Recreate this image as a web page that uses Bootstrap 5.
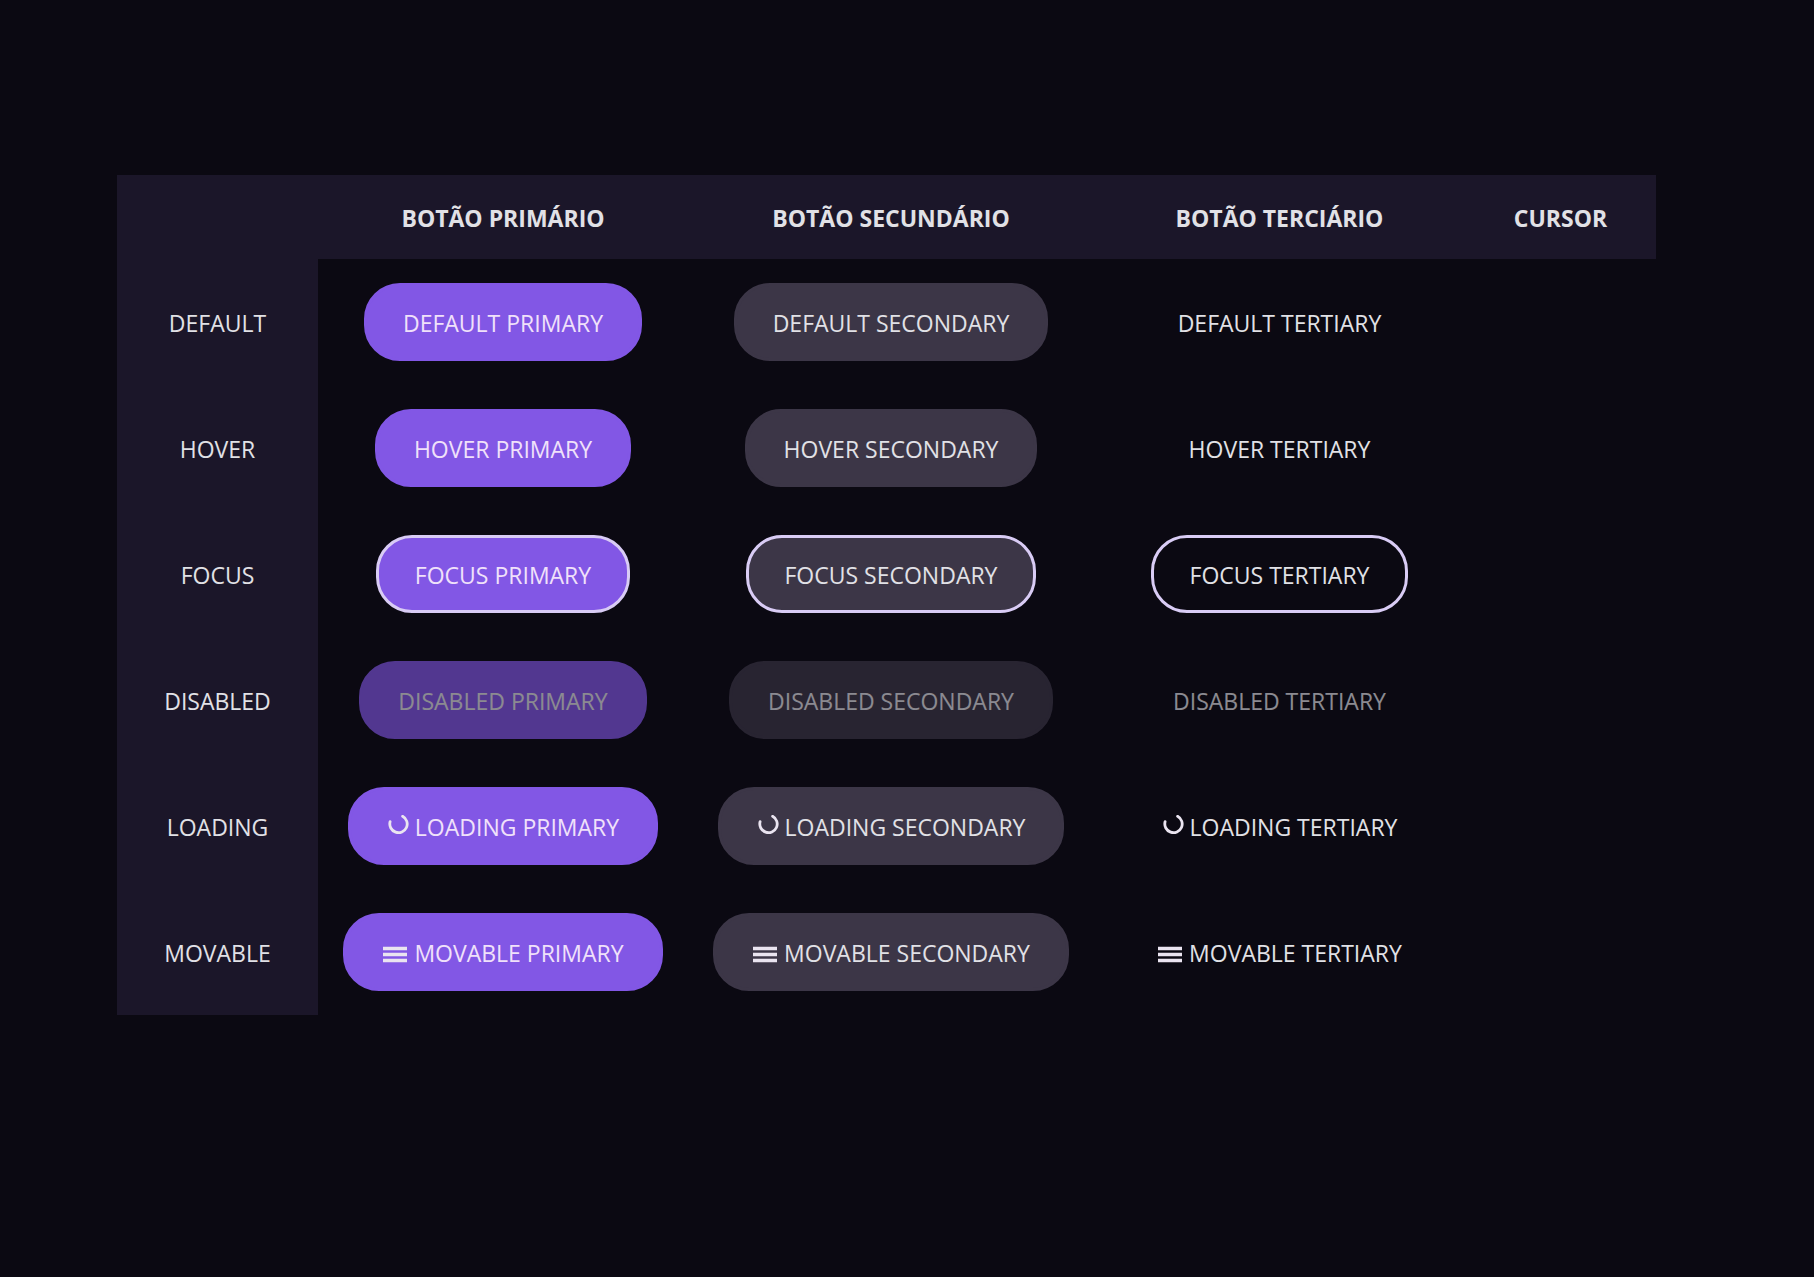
<!DOCTYPE html>
<html lang="pt-BR">
<head>
<meta charset="utf-8">
<meta name="viewport" content="width=device-width, initial-scale=1">
<title>Botões</title>
<link href="https://cdn.jsdelivr.net/npm/bootstrap@5.3.0/dist/css/bootstrap.min.css" rel="stylesheet">
<style>
  body { background: #0b0912; color: #e1e1e6; font-family: "Segoe UI", "Open Sans", sans-serif; font-size: 23px; line-height: 36px; }
  .states-page { padding: 175px 158px 120px 117px; }
  .states-table { table-layout: fixed; border-collapse: collapse; }
  .states-table td { padding: 24px 0; }
  .states-table th { padding: 25px 0 23px; }
  .states-table thead, .states-table tbody th { background: #1b1629; }
  .col-state { width: 201px; }
  .col-primary { width: 370px; }
  .col-secondary { width: 406px; }
  .col-tertiary { width: 371px; }
  .col-cursor { width: 191px; }
  .state-btn {
    --bs-btn-font-size: 23px;
    --bs-btn-line-height: 36px;
    --bs-btn-border-width: 3px;
    --bs-btn-border-radius: 36px;
    --bs-btn-color: #e1e1e6;
    --bs-btn-hover-color: #e1e1e6;
    --bs-btn-active-color: #e1e1e6;
    --bs-btn-disabled-color: #e1e1e6;
    --bs-btn-disabled-border-color: transparent;
    --bs-btn-disabled-opacity: .6;
    padding: 19px 36px 17px;
  }
  .state-primary { --bs-btn-bg: #8257e5; --bs-btn-border-color: #8257e5; --bs-btn-hover-bg: #9466ff; --bs-btn-hover-border-color: #9466ff; --bs-btn-active-bg: #8257e5; --bs-btn-disabled-bg: #8257e5; --bs-btn-disabled-border-color: #8257e5; --bs-btn-color: #f0e1fa; }
  .state-secondary { --bs-btn-bg: #3c3647; --bs-btn-border-color: #3c3647; --bs-btn-hover-bg: #4a4456; --bs-btn-hover-border-color: #4a4456; --bs-btn-active-bg: #3c3647; --bs-btn-disabled-bg: #3c3647; --bs-btn-disabled-border-color: #3c3647; }
  .state-focus { --bs-btn-border-color: #d9ccf5; }
  .icon-load { width: 22px; height: 24px; }
  .icon-move { width: 26px; height: 24px; }
  .state-btn svg { flex: none; margin-right: 6px; }
</style>
<script src="https://cdn.jsdelivr.net/npm/bootstrap@5.3.0/dist/js/bootstrap.bundle.min.js"></script>
</head>
<body>
<svg class="d-none" aria-hidden="true">
  <symbol id="load" viewBox="0 0 22 24"><path d="M15.6 1.3A8.7 8.7 0 1 1 3.1 6.7" fill="none" stroke="#eae4f0" stroke-width="2.8" stroke-linecap="round"/></symbol>
  <symbol id="move" viewBox="0 0 26 24"><path d="M1 7.5h24M1 13.5h24M1 19.5h24" fill="none" stroke="#eae4f0" stroke-width="3.4"/></symbol>
</svg>
<main class="states-page">
  <table class="states-table w-100 text-center align-middle text-nowrap">
    <colgroup><col class="col-state"><col class="col-primary"><col class="col-secondary"><col class="col-tertiary"><col class="col-cursor"></colgroup>
    <thead>
      <tr><td></td><th scope="col">BOTÃO PRIMÁRIO</th><th scope="col">BOTÃO SECUNDÁRIO</th><th scope="col">BOTÃO TERCIÁRIO</th><th scope="col">CURSOR</th></tr>
    </thead>
    <tbody>
      <tr>
        <th class="fw-normal" scope="row">DEFAULT</th>
        <td><button type="button" class="btn state-btn state-primary d-inline-flex align-items-center">DEFAULT PRIMARY</button></td>
        <td><button type="button" class="btn state-btn state-secondary d-inline-flex align-items-center">DEFAULT SECONDARY</button></td>
        <td><button type="button" class="btn state-btn d-inline-flex align-items-center">DEFAULT TERTIARY</button></td>
        <td></td>
      </tr>
      <tr>
        <th class="fw-normal" scope="row">HOVER</th>
        <td><button type="button" class="btn state-btn state-primary d-inline-flex align-items-center">HOVER PRIMARY</button></td>
        <td><button type="button" class="btn state-btn state-secondary d-inline-flex align-items-center">HOVER SECONDARY</button></td>
        <td><button type="button" class="btn state-btn d-inline-flex align-items-center">HOVER TERTIARY</button></td>
        <td></td>
      </tr>
      <tr>
        <th class="fw-normal" scope="row">FOCUS</th>
        <td><button type="button" class="btn state-btn state-primary state-focus d-inline-flex align-items-center">FOCUS PRIMARY</button></td>
        <td><button type="button" class="btn state-btn state-secondary state-focus d-inline-flex align-items-center">FOCUS SECONDARY</button></td>
        <td><button type="button" class="btn state-btn state-focus d-inline-flex align-items-center">FOCUS TERTIARY</button></td>
        <td></td>
      </tr>
      <tr>
        <th class="fw-normal" scope="row">DISABLED</th>
        <td><button type="button" disabled class="btn state-btn state-primary d-inline-flex align-items-center">DISABLED PRIMARY</button></td>
        <td><button type="button" disabled class="btn state-btn state-secondary d-inline-flex align-items-center">DISABLED SECONDARY</button></td>
        <td><button type="button" disabled class="btn state-btn d-inline-flex align-items-center">DISABLED TERTIARY</button></td>
        <td></td>
      </tr>
      <tr>
        <th class="fw-normal" scope="row">LOADING</th>
        <td><button type="button" class="btn state-btn state-primary d-inline-flex align-items-center"><svg class="icon-load" aria-hidden="true"><use href="#load"/></svg>LOADING PRIMARY</button></td>
        <td><button type="button" class="btn state-btn state-secondary d-inline-flex align-items-center"><svg class="icon-load" aria-hidden="true"><use href="#load"/></svg>LOADING SECONDARY</button></td>
        <td><button type="button" class="btn state-btn d-inline-flex align-items-center"><svg class="icon-load" aria-hidden="true"><use href="#load"/></svg>LOADING TERTIARY</button></td>
        <td></td>
      </tr>
      <tr>
        <th class="fw-normal" scope="row">MOVABLE</th>
        <td><button type="button" class="btn state-btn state-primary d-inline-flex align-items-center"><svg class="icon-move" aria-hidden="true"><use href="#move"/></svg>MOVABLE PRIMARY</button></td>
        <td><button type="button" class="btn state-btn state-secondary d-inline-flex align-items-center"><svg class="icon-move" aria-hidden="true"><use href="#move"/></svg>MOVABLE SECONDARY</button></td>
        <td><button type="button" class="btn state-btn d-inline-flex align-items-center"><svg class="icon-move" aria-hidden="true"><use href="#move"/></svg>MOVABLE TERTIARY</button></td>
        <td></td>
      </tr>
    </tbody>
  </table>
</main>
</body>
</html>
